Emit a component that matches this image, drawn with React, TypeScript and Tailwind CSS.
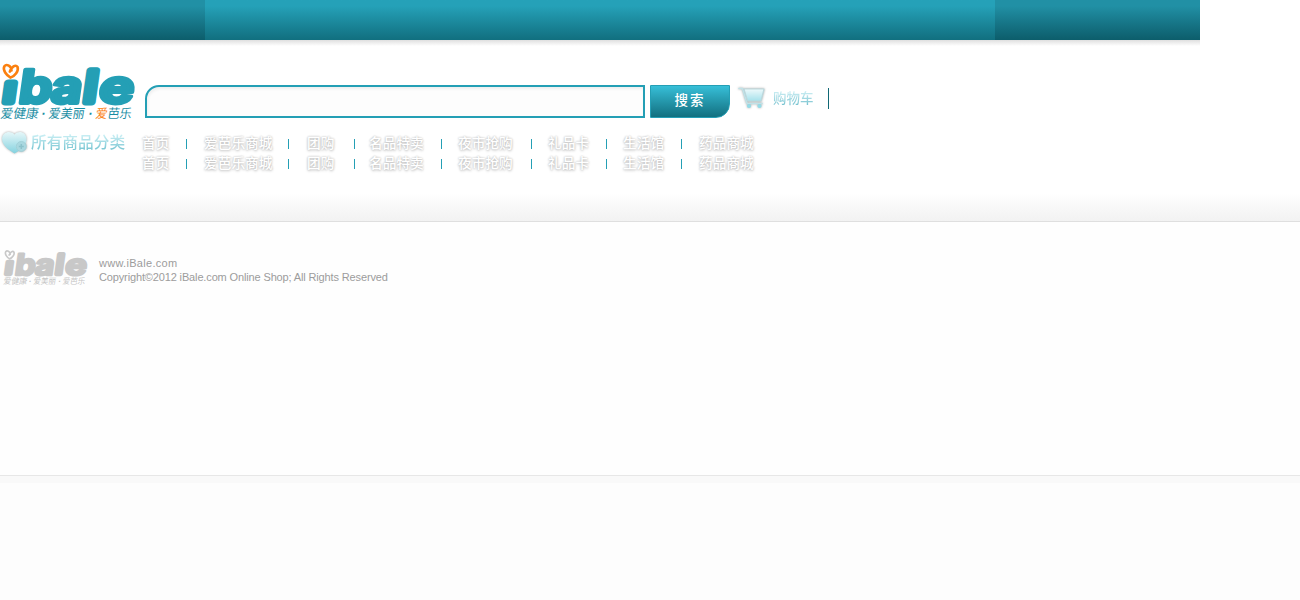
const navItems = [
  { label: '首页', cell: 'w-[46px]', gap: 'pl-[1px]' },
  { label: '爱芭乐商城', cell: 'w-[102px]', gap: 'pl-[17px]' },
  { label: '团购', cell: 'w-[66px]', gap: 'pl-[18px]' },
  { label: '名品特卖', cell: 'w-[87px]', gap: 'pl-[14px]' },
  { label: '夜市抢购', cell: 'w-[90px]', gap: 'pl-[16px]' },
  { label: '礼品卡', cell: 'w-[75px]', gap: 'pl-[16px]' },
  { label: '生活馆', cell: 'w-[75px]', gap: 'pl-[16px]' },
  { label: '药品商城', cell: 'w-[76px]', gap: 'pl-[17px]' },
];

function Logo({ muted = false }: { muted?: boolean }) {
  const main = muted ? '#c8c8c8' : '#249fb5';
  const accent = muted ? '#c8c8c8' : '#fb800f';
  const slogan = muted ? '#c4c4c4' : '#188da3';
  return (
    <svg
      viewBox="0 0 136 60"
      className={muted ? 'h-[38px] w-[85px] overflow-visible' : 'h-[60px] w-[136px] overflow-visible'}
      preserveAspectRatio="none"
      aria-label="ibale"
    >
      <g transform="translate(0 41) skewX(-8)" fill={main} stroke={main} strokeWidth="3.8" strokeLinejoin="round" fontFamily="Inter, sans-serif" fontWeight="700" fontSize="46">
        <text x="2.5" y="-1" fontSize="35" strokeWidth="7" textLength="11" lengthAdjust="spacingAndGlyphs">ı</text>
        <text x="17.5" y="0" textLength="33" lengthAdjust="spacingAndGlyphs">b</text>
        <text x="49.5" y="0" textLength="31" lengthAdjust="spacingAndGlyphs">a</text>
        <text x="82.5" y="-1" fontSize="43" strokeWidth="7" textLength="12" lengthAdjust="spacingAndGlyphs">l</text>
        <text x="97.5" y="0" textLength="35" lengthAdjust="spacingAndGlyphs">e</text>
      </g>
      <path d="M11.5 8.5 C11.5 4 6.5 1.5 4.4 4.2 C2.3 8 6.5 13.5 10.5 15.6 C15 14 18.8 9 17.6 5 C15.5 2 11.5 5 9.8 9.6" fill="none" stroke={accent} strokeWidth="2.6" strokeLinecap="round" strokeLinejoin="round" />
      <g transform="translate(0 56) skewX(-9)" fontFamily="'Noto Sans CJK SC', sans-serif" fontSize="12.8" fill={slogan}>
        <text x="0" y="0" textLength="38" lengthAdjust="spacingAndGlyphs">爱健康</text>
        <text x="41" y="0" fontFamily="'Liberation Sans', sans-serif" fontWeight="700">·</text>
        <text x="48" y="0" textLength="36" lengthAdjust="spacingAndGlyphs">爱美丽</text>
        <text x="88" y="0" fontFamily="'Liberation Sans', sans-serif" fontWeight="700">·</text>
        <text x="95" y="0" textLength="36" lengthAdjust="spacingAndGlyphs"><tspan fill={accent}>爱</tspan>芭乐</text>
      </g>
    </svg>
  );
}

function NavRow() {
  return (
    <ul className="flex h-5 items-center">
      {navItems.map((item, i) => (
        <li key={item.label} className={`flex h-5 shrink-0 items-center ${item.cell} ${item.gap}`}>
          <a className="grow whitespace-nowrap text-[13.7px] font-medium leading-5 text-white [text-shadow:0_0_2px_#b8b8b8,0_1px_3px_#c0c0c0]">{item.label}</a>
          {i < navItems.length - 1 && <span className="h-[10px] w-px bg-[#249fb5]" />}
        </li>
      ))}
    </ul>
  );
}

function Cart() {
  return (
    <svg viewBox="0 0 32 28" className="h-7 w-8 drop-shadow-[0_0_1px_#aaa]">
      <defs>
        <linearGradient id="cart" x1="0" y1="0" x2="0" y2="1">
          <stop offset="0" stopColor="#edf9fb" />
          <stop offset="1" stopColor="#a5e1eb" />
        </linearGradient>
      </defs>
      <path d="M3 4.5 H6.5 L11 19.5 H26" fill="none" stroke="#c0e2e8" strokeWidth="1.7" strokeLinejoin="round" strokeLinecap="round" />
      <path d="M8 5 H28 L25 17 H11.5 Z" fill="url(#cart)" stroke="#bcd9de" strokeWidth="1.2" strokeLinejoin="round" />
      <circle cx="13" cy="22" r="2.1" fill="#94dce8" />
      <circle cx="23.5" cy="22" r="2.1" fill="#94dce8" />
    </svg>
  );
}

function CategoryHeart() {
  return (
    <svg viewBox="0 0 30 26" className="mt-px h-[26px] w-[31px] drop-shadow-[0_0_1px_#aaa]">
      <defs>
        <linearGradient id="heart" x1="0" y1="0" x2="0" y2="1">
          <stop offset="0" stopColor="#e6f7f9" />
          <stop offset="1" stopColor="#84d2df" />
        </linearGradient>
      </defs>
      <path d="M14 4.5 C10 0 1.5 2 1.5 9 C1.5 15 8 20 14 23.5 C21 20 26 15 26 9 C26 2 18 0 14 4.5 Z" fill="url(#heart)" />
      <circle cx="20.8" cy="16.5" r="5" fill="#a9d8e0" stroke="#9fced6" strokeWidth="0.8" />
      <path d="M20.8 14 V19 M18.3 16.5 H23.3" stroke="#8cc2cb" strokeWidth="1.5" />
    </svg>
  );
}

export default function App() {
  return (
    <div className="flex h-[600px] w-[1300px] flex-col overflow-hidden bg-white font-['Liberation_Sans','Noto_Sans_CJK_SC',sans-serif] antialiased">
      <header className="h-[221px] shrink-0">
        <div className="flex h-10 w-[1200px] bg-linear-to-b from-[#2190a5] from-15% to-[#0c5d6b]">
          <div className="ml-[205px] h-10 w-[790px] bg-linear-to-b from-[#25a1b8] from-15% to-[#116f7f]" />
        </div>
        <div className="h-[6px] w-[1200px] bg-linear-to-b from-[#dfdfdf] to-white" />
        <div className="flex h-[83px]">
          <div className="w-[145px] shrink-0 pt-[16px]">
            <Logo />
          </div>
          <div className="mt-[39px] h-[33px] w-[500px] rounded-tl-[14px] border-2 border-[#249fb5] bg-[#fdfdfd] shadow-[inset_1px_2px_3px_#eeeeee]" />
          <button className="mt-[39px] ml-[5px] h-[33px] w-20 rounded-br-[14px] border border-[#249fb5] bg-linear-to-b from-[#37bfd8] to-[#127080] text-[13.5px] font-medium tracking-[2px] text-white">搜索</button>
          <div className="mt-[38px] ml-[6px] flex h-7 w-[92px]">
            <Cart />
            <span className="ml-[4px] whitespace-nowrap bg-linear-to-b from-[#d7f4f8] from-20% to-[#6fbfcd] to-80% bg-clip-text pt-px pl-px text-[13.5px] font-medium leading-7 text-transparent">购物车</span>
          </div>
          <div className="mt-[42px] h-[21px] w-px bg-[#116875]" />
        </div>
        <div className="flex h-[45px]">
          <div className="flex w-[141px] shrink-0">
            <CategoryHeart />
            <span className="h-[26px] whitespace-nowrap bg-linear-to-b from-[#ccf0f5] from-20% to-[#79c6d3] to-80% bg-clip-text pt-px text-[15.7px] font-medium leading-[26px] text-transparent">所有商品分类</span>
          </div>
          <nav className="pt-[5px]">
            <NavRow />
            <NavRow />
          </nav>
        </div>
        <div className="mt-[19px] h-7 bg-linear-to-b from-white to-[#f2f2f2]" />
      </header>
      <footer className="flex h-[254px] shrink-0 border-t border-[#dfdfdf] bg-[#fefefe]">
        <div className="w-[98px] pt-[27px] pl-[3px]">
          <Logo muted />
        </div>
        <div className="pt-[34px] pl-px text-[11px] leading-[14px] text-[#9c9c9c]">
          <p className="w-fit tracking-[0.3px]">www.iBale.com</p>
          <p className="w-fit whitespace-nowrap tracking-[-0.14px]">Copyright©2012 iBale.com Online Shop; All Rights Reserved</p>
        </div>
      </footer>
      <div className="h-[8px] shrink-0 border-t border-[#e7e7e7] bg-[#f9f9f9]" />
      <div className="grow bg-[#fdfdfd]" />
    </div>
  );
}
